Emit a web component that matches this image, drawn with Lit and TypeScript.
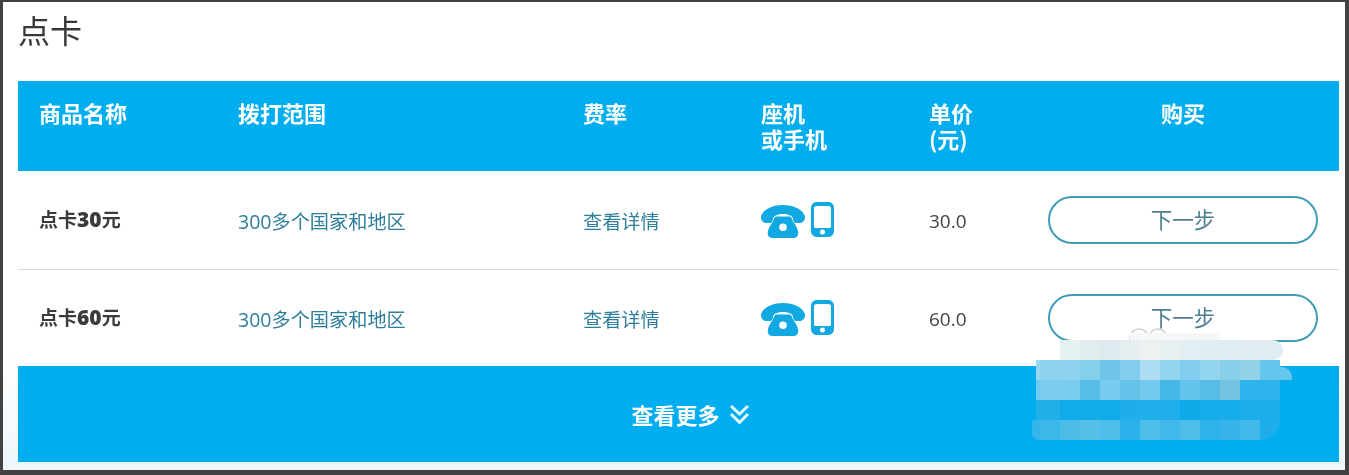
import { LitElement, html, css, svg } from "lit";
import { customElement } from "lit/decorators.js";

const phone = svg`<path d="M22 0C33 0 41 4 44 11C44.500 15 42 18 39 18L35 18C33 18 32 16 32 13.500C31.500 10.500 27 9 22 9C17 9 12.500 10.500 12 13.500C12 16 11 18 9 18L5 18C2 18-.5 15 0 11C3 4 11 0 22 0Z"/><path fill-rule="evenodd" d="M15.500 11.500L28.500 11.500C30.500 11.500 31 14 32 16.500C33.500 18.500 36 22 37 26C38 30 36 33 33 33L11 33C8 33 6 30 7 26C8 22 10.500 18.500 12 16.500C13 14 13.500 11.500 15.500 11.500ZM22 18.500A3.800 3.800 0 1 0 22 26.100A3.800 3.800 0 1 0 22 18.500Z"/>`;
const mobile = svg`<path fill-rule="evenodd" d="M6 0H17C20.500 0 23 2.500 23 6V29C23 32.500 20.500 35 17 35H6C2.500 35 0 32.500 0 29V6C0 2.500 2.500 0 6 0ZM5.500 4C4 4 3 5 3 6.500V24.500C3 25.500 4 26 5 26H18C19 26 20 25.500 20 24.500V6.500C20 5 19 4 17.500 4ZM11.500 27.500A2.500 2.500 0 1 0 11.500 32.500A2.500 2.500 0 1 0 11.500 27.500Z"/>`;

const items = [
  { name: "点卡", amount: "30", price: "30.0" },
  { name: "点卡", amount: "60", price: "60.0" },
];

const mosaic: { start: number; colors: string[] }[] = [
  { start: 24, colors: ["#e6f1f2", "#e0edef", "#deebee", "#e6eeef", "#ecf2f2", "#e7eff0", "#e2eef1", "#e0edf1", "#deedf2", "#dfedf2", "#dfedf2"] },
  { start: 0, colors: ["#9bd6ef", "#8fd2ee", "#90d3ee", "#83cfec", "#6fc6e8", "#82ceec", "#aeddf1", "#93d4ee", "#82ceec", "#93d5ef", "#88cfe9", "#95d2e8", "#66c6ec"] },
  { start: 0, colors: ["#70c9ee", "#7ccdef", "#7acdef", "#58bee8", "#78ccef", "#65c3ea", "#73caef", "#45b8e8", "#63c3ea", "#57bde8", "#74c3e3", "#2fb3ec", "#2fb3ec"] },
  { start: 0, colors: ["#20afe9", "#20afe9", "#11abeb", "#12ade9", "#10abeb", "#1eaeeb", "#20afeb", "#20afeb", "#0eabeb", "#17adea", "#17adea", "#1caee9", "#1caee9"] },
  { start: 0, colors: ["#33b5ea", "#3ab8ea", "#4cbce9", "#56c0e9", "#4dbde9", "#2bb1ea", "#4dbde9", "#42b9e9", "#4dbde9", "#2db2ea", "#37b5ea", "#42b9e9", "#1eaeeb"] },
];

@customElement("app-root")
export class AppRoot extends LitElement {
  static styles = css`
    :host {
      display: block;
      position: relative;
      height: 475px;
      box-sizing: border-box;
      padding: 2px 4px 5px 3px;
      background: #424242;
      font-family: "Noto Sans CJK SC", "Open Sans", sans-serif;
      overflow: hidden;
    }
    .panel {
      height: 100%;
      box-sizing: border-box;
      padding: 0 6px 8px 15px;
      background: linear-gradient(#fff 75%, #eef6fb);
      display: flex;
      flex-direction: column;
      filter: blur(0.4px);
    }
    .title {
      height: 79px;
      box-sizing: border-box;
      padding: 5px 0 0 0;
      margin: 0;
      font-size: 32px;
      line-height: 44px;
      font-weight: 400;
      color: #3b3638;
    }
    .row {
      display: grid;
      grid-template-columns: 199px 345px 178px 168px 119px 312px;
      background: #fff;
    }
    .cell { padding: 0 21px; display: flex; align-items: center; }
    .head {
      height: 90px;
      background: #00aeef;
      color: #fff;
      font-size: 22px;
      font-weight: 700;
      line-height: 26px;
    }
    .head .cell { display: block; padding-top: 18px; }
    .head .buy { text-align: center; }
    .r1 { height: 98px; border-bottom: 1px solid #d9dcdd; box-sizing: content-box; }
    .r2 { height: 96px; }
    .name { font-size: 19px; font-weight: 700; color: #3b3b3b; padding-bottom: 2px; }
    .name b { font-family: "Open Sans", sans-serif; font-size: 21px; }
    .link { font-size: 19.200px; color: #2f7f9c; padding-top: 2px; }
    .link .num { font-family: "Open Sans", sans-serif; font-size: 19.500px; }
    .price { font-family: "Open Sans", sans-serif; font-size: 19px; color: #444; padding-top: 2px; }
    .icons { gap: 6px; fill: #12a9e3; }
    .phone { width: 44px; height: 33px; display: block; margin-top: 2px; }
    .mobile { width: 23px; height: 35px; display: block; margin-top: -1px; }
    .next {
      width: 100%;
      height: 48px;
      box-sizing: border-box;
      margin: 0;
      border: 2.500px solid #3f9db8;
      border-radius: 24px;
      background: #fff;
      font: inherit;
      font-size: 21.500px;
      color: #4d7f90;
      padding: 0 0 4px;
    }
    .more {
      height: 96px;
      background: #00aeef;
      color: #fff;
      font-size: 22px;
      font-weight: 700;
      display: flex;
      align-items: center;
      justify-content: center;
      gap: 9px;
      padding-left: 24px;
    }
    .chev { width: 21px; height: 21px; display: block; fill: none; stroke: #e4f8fe; stroke-width: 3; }
    .mosaic {
      position: absolute;
      left: 1036px;
      top: 340px;
      display: flex;
      flex-direction: column;
    }
    .strip {
      position: absolute;
      left: 1130px;
      top: 333px;
      width: 90px;
      height: 7px;
      background: #f5f8f8;
    }
    .rings {
      position: absolute;
      left: 1128px;
      top: 326px;
      width: 44px;
      height: 14px;
      fill: none;
      stroke: #cfcfcf;
      stroke-width: 1.500;
    }
    .mrow { display: flex; height: 20px; }
    .mcell { width: 20px; height: 20px; flex: none; }
    .mrow .thin { width: 4px; }
    .r0 .mcell:last-child { width: 23px; border-radius: 0 10px 10px 0; }
    .mr4 .thin { width: 8px; margin-left: -4px; border-radius: 0 0 0 6px; }
    .mr4 .mcell:last-child { border-radius: 0 0 20px 0; }
    .tip {
      width: 12px;
      height: 13px;
      margin-top: 7px;
      background: #66c6ec;
      border-radius: 0 10px 0 0;
    }
  `;

  render() {
    return html`
      <div class="panel">
        <h1 class="title">点卡</h1>
        <div class="row head">
          <div class="cell">商品名称</div>
          <div class="cell">拨打范围</div>
          <div class="cell">费率</div>
          <div class="cell">座机<br />或手机</div>
          <div class="cell">单价<br />(元)</div>
          <div class="cell buy">购买</div>
        </div>
        ${items.map(
          (it, i) => html`
            <div class="row ${i === 0 ? "r1" : "r2"}">
              <div class="cell name"><span>${it.name}<b>${it.amount}</b>元</span></div>
              <div class="cell link"><span><span class="num">300</span>多个国家和地区</span></div>
              <div class="cell link">查看详情</div>
              <div class="cell icons">
                <svg class="phone" viewBox="0 0 44 33">${phone}</svg>
                <svg class="mobile" viewBox="0 0 23 35">${mobile}</svg>
              </div>
              <div class="cell price">${it.price}</div>
              <div class="cell"><button class="next">下一步</button></div>
            </div>
          `
        )}
        <div class="more">
          <span>查看更多</span>
          <svg class="chev" viewBox="0 0 21 21">
            <path d="M2 2L10.500 10L19 2" />
            <path d="M2 10L10.500 18.500L19 10" />
          </svg>
        </div>
      </div>
      <svg class="rings" viewBox="0 0 44 14">
        <circle cx="11" cy="12" r="9" />
        <circle cx="30" cy="12" r="9" />
      </svg>
      <div class="strip"></div>
      <div class="mosaic">
        ${mosaic.map(
          (r, ri) => html`
            <div class="mrow ${ri === 0 ? "r0" : ri === 4 ? "mr4" : ""}">
              ${r.start ? html`<div class="mcell" style="width:${r.start}px"></div>` : ""}
              ${r.colors.map(
                (c, ci) =>
                  html`<div class="mcell ${ri > 0 && ci === 0 ? "thin" : ""}" style="background:${c}"></div>`
              )}
              ${ri === 1 ? html`<div class="tip"></div>` : ""}
            </div>
          `
        )}
      </div>
    `;
  }
}
